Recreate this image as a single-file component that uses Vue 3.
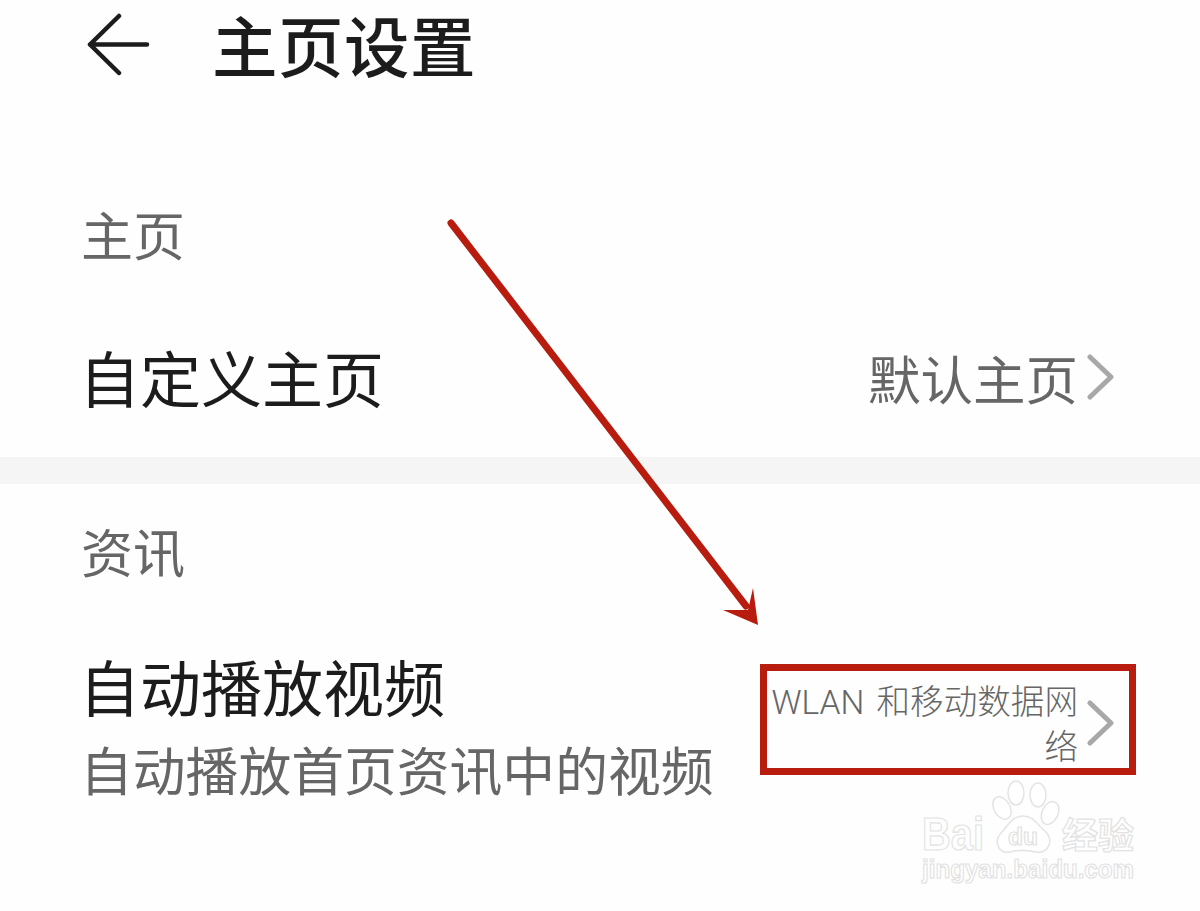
<script setup>
const rows = { home: '默认主页', video: 'WLAN 和移动数据网络' }
</script>

<template>
  <div class="page">
    <header class="header">
      <svg class="back" width="64" height="64" viewBox="0 0 64 64" fill="none">
        <path d="M33 3 L4 31.500 L33 60 M4 31.500 H61" stroke="#1c1c1c" stroke-width="4.500" stroke-linecap="round" stroke-linejoin="round" />
      </svg>
      <h1 class="title">主页设置</h1>
    </header>

    <section class="first">
      <div class="label">主页</div>
      <div class="row row-home">
        <div class="row-title">自定义主页</div>
        <div class="value-wrap">
          <span class="value">{{ rows.home }}</span>
          <svg class="chev" width="30" height="46" viewBox="0 0 30 46" fill="none">
            <path d="M3 3 L24 23 L3 43" stroke="#a8a8a8" stroke-width="5" stroke-linecap="round" stroke-linejoin="round" />
          </svg>
        </div>
      </div>
    </section>

    <div class="divider"></div>

    <section>
      <div class="label label-two">资讯</div>
      <div class="row row-video">
        <div class="texts">
          <div class="row-title">自动播放视频</div>
          <div class="sub">自动播放首页资讯中的视频</div>
        </div>
        <div class="value-wrap value-wrap-video">
          <span class="value small">{{ rows.video }}</span>
          <svg class="chev chev-video" width="30" height="46" viewBox="0 0 30 46" fill="none">
            <path d="M3 3 L24 23 L3 43" stroke="#a8a8a8" stroke-width="5" stroke-linecap="round" stroke-linejoin="round" />
          </svg>
        </div>
      </div>
    </section>

    <div class="redbox"></div>

    <svg class="arrow" width="1200" height="911" viewBox="0 0 1200 911" fill="none">
      <path d="M451 223 L746 606" stroke="#b81c0e" stroke-width="7" stroke-linecap="round" />
      <path d="M758 625 L753 588 L748 610 L723 610 Z" fill="#b81c0e" />
    </svg>

    <svg class="mark" width="240" height="130" viewBox="0 0 240 130" fill="none">
      <g stroke="#e4e4e4" stroke-width="1.500" fill="#ffffff">
        <ellipse cx="82" cy="38" rx="8" ry="12" transform="rotate(-30 82 38)" />
        <ellipse cx="96" cy="23" rx="8" ry="12" />
        <ellipse cx="118" cy="25" rx="8" ry="12" />
        <ellipse cx="130" cy="43" rx="8" ry="12" transform="rotate(25 130 43)" />
        <path d="M103 46 C92 46 88 56 82 62 C73 71 78 84 90 82 C98 80 108 80 116 82 C128 84 134 71 126 62 C118 56 114 46 103 46 Z" />
      </g>
      <g class="mark-text" stroke="#e2e2e2" stroke-width="1.200" fill="#ffffff">
        <text x="2" y="80" font-size="46" textLength="62" lengthAdjust="spacingAndGlyphs">Bai</text>
        <text x="88" y="75" font-size="24" textLength="30" lengthAdjust="spacingAndGlyphs">du</text>
        <text x="142" y="79" font-size="36" textLength="72" class="cjk">经验</text>
        <text x="2" y="108" font-size="26" textLength="212" lengthAdjust="spacingAndGlyphs">jingyan.baidu.com</text>
      </g>
    </svg>
  </div>
</template>

<style>
html, body { margin: 0; background: #fff; }
</style>

<style scoped>
.page {
  position: relative;
  width: 1200px;
  height: 911px;
  overflow: hidden;
  background: #fefefe;
  font-family: "Noto Sans CJK SC", "Noto Sans", sans-serif;
  color: #1c1c1c;
}
.header {
  display: flex;
  align-items: flex-start;
  height: 96px;
  padding-left: 86px;
  box-sizing: border-box;
}
.back { flex: none; margin-top: 13px; }
.title {
  margin: 8px 0 0 62px;
  font-size: 65.500px;
  font-weight: 500;
  line-height: 72px;
  letter-spacing: 0.5px;
}
.first { padding-top: 103px; }
.label {
  height: 70px;
  padding-left: 81px;
  font-size: 52px;
  line-height: 70px;
  color: #666;
}
.label-two { margin-top: 32px; }
.row {
  display: flex;
  align-items: center;
  justify-content: space-between;
  padding: 0 85px 0 79px;
}
.row-home {
  height: 154px;
  margin-top: 34px;
  box-sizing: border-box;
  padding-bottom: 7px;
}
.row-video { height: 200px; margin-top: 56px; align-items: flex-start; }
.row-title { font-size: 61px; line-height: 76px; }
.texts { margin-top: 6px; }
.sub { font-size: 52.800px; line-height: 76px; margin: 6px 0 0 1px; color: #666; }
.value-wrap { display: flex; align-items: center; }
.value-wrap-video { margin-top: 38px; }
.value { font-size: 52.500px; line-height: 70px; color: #666; }
.value.small {
  width: 312px;
  font-size: 33.600px;
  line-height: 45px;
  text-align: right;
  font-family: Roboto, "Noto Sans CJK SC", sans-serif;
  font-weight: 300;
  word-spacing: 4px;
  color: #666;
}
.chev { flex: none; margin-left: 9px; margin-right: -2px; }
.chev-video { margin-top: -4px; }
.divider { height: 27px; background: #f5f5f5; }
.redbox {
  position: absolute;
  left: 760px;
  top: 664px;
  width: 376px;
  height: 111px;
  box-sizing: border-box;
  border: 7px solid #b81c0e;
}
.arrow { position: absolute; left: 0; top: 0; }
.mark { position: absolute; left: 920px; top: 770px; }
.mark-text { font-family: "Liberation Sans", sans-serif; font-weight: 700; }
.cjk { font-family: "Noto Sans CJK SC", sans-serif; }
</style>
